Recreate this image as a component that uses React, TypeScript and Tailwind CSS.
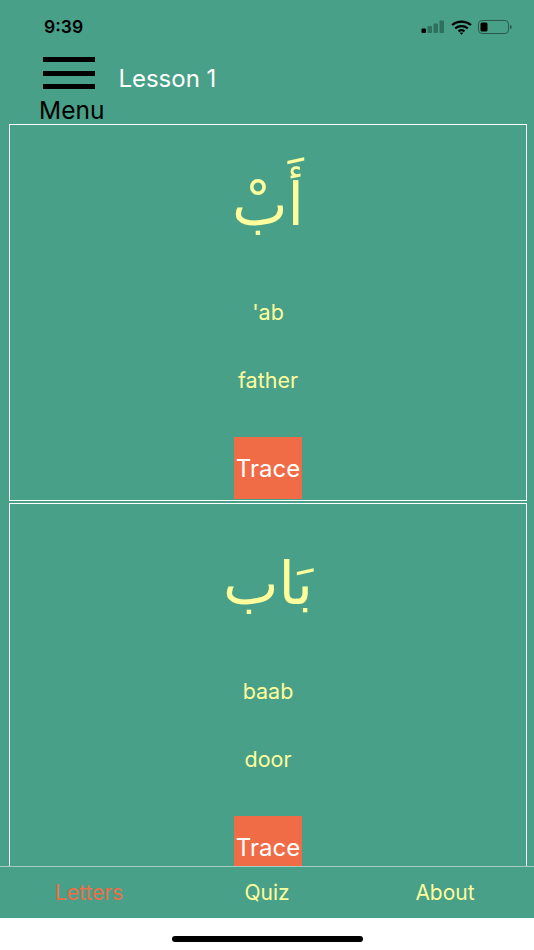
const cards = [
  { arabic: 'أَبْ', latin: "'ab", meaning: 'father' },
  { arabic: 'بَاب', latin: 'baab', meaning: 'door' },
];

function StatusIcons() {
  return (
    <div className="flex items-center gap-[6px]">
      {/* signal */}
      <svg width="24" height="14" viewBox="0 0 24 14">
        <rect x="0.500" y="8.500" width="4.500" height="4.500" rx="1" fill="#000" />
        <rect x="6.500" y="6" width="4.500" height="7" rx="1" fill="#2f6f5e" />
        <rect x="12.500" y="3.500" width="4.500" height="9.500" rx="1" fill="#2f6f5e" />
        <rect x="18.500" y="0.500" width="4.500" height="12.500" rx="1" fill="#2f6f5e" />
      </svg>
      {/* wifi */}
      <svg width="21" height="15" viewBox="0 0 21 15" fill="none" stroke="#000" strokeWidth="2.2">
        <path d="M1 5 C6.500 0.500 14.500 0.500 20 5" />
        <path d="M4.200 8.300 C7.800 5.500 13.200 5.500 16.800 8.300" />
        <path d="M7.500 11.300 C9.300 10 11.700 10 13.500 11.300" />
        <path d="M10.500 14.800 L8.800 13 C9.800 12.400 11.200 12.400 12.200 13 Z" fill="#000" stroke="none" />
      </svg>
      {/* battery */}
      <svg width="34" height="14" viewBox="0 0 34 14" fill="none">
        <rect x="0.500" y="0.500" width="30" height="13" rx="3.500" stroke="#2b5a4d" />
        <rect x="2.500" y="2.500" width="7" height="9" rx="1.500" fill="#000" />
        <path d="M32 5 C33.200 5.300 33.800 6 33.800 7 C33.800 8 33.200 8.700 32 9 Z" fill="#2b5a4d" />
      </svg>
    </div>
  );
}

function Card({ arabic, latin, meaning }: { arabic: string; latin: string; meaning: string }) {
  return (
    <div className="flex h-[377px] shrink-0 flex-col items-center border border-white">
      <div
        dir="rtl"
        className="mt-[40px] h-[80px] font-['DejaVu_Sans',sans-serif] text-[59px] leading-[80px] text-[#fdfd9d]"
      >
        {arabic}
      </div>
      <div className="mt-[55px] text-[21.500px] leading-[24px] text-[#fdfd9d]">{latin}</div>
      <div className="mt-[44px] text-[21.500px] leading-[24px] text-[#fdfd9d]">{meaning}</div>
      <button className="mt-[45px] flex h-[62px] w-[68px] shrink-0 items-center justify-center bg-[#f06c47] pt-[2px] text-[24px] text-white">
        Trace
      </button>
    </div>
  );
}

export default function App() {
  return (
    <div className="flex h-[950px] w-[534px] flex-col overflow-hidden bg-[#48a088] font-['Inter',sans-serif]">
      <div className="flex h-[42px] shrink-0 items-center justify-between pl-[44px] pr-[22px] pt-[12px]">
        <span className="text-[17.500px] font-semibold leading-none text-black">9:39</span>
        <StatusIcons />
      </div>

      <div className="flex h-[82px] shrink-0 pl-[39px]">
        <div className="flex flex-col">
          <div className="ml-[4px] mt-[15px] flex h-[32px] w-[52px] flex-col justify-between">
            <div className="h-[5px] bg-black" />
            <div className="h-[5px] bg-black" />
            <div className="h-[5px] bg-black" />
          </div>
          <span className="mt-[8px] text-[24.500px] leading-[26px] text-black">Menu</span>
        </div>
        <span className="ml-[14px] mt-[23px] text-[24px] leading-[28px] text-white">Lesson 1</span>
      </div>

      <div className="flex min-h-0 flex-1 flex-col gap-[2px] overflow-hidden pl-[9px] pr-[7px]">
        {cards.map((c) => (
          <Card key={c.latin} {...c} />
        ))}
      </div>

      <div className="flex h-[52px] shrink-0 items-center border-t border-[#a4cfc3] text-[21px]">
        <span className="flex-1 text-center text-[#f06c47]">Letters</span>
        <span className="flex-1 text-center text-[#fdfd9d]">Quiz</span>
        <span className="flex-1 text-center text-[#fdfd9d]">About</span>
      </div>

      <div className="flex h-[32px] shrink-0 justify-center bg-white pt-[18px]">
        <div className="h-[6px] w-[191px] rounded-full bg-black" />
      </div>
    </div>
  );
}
